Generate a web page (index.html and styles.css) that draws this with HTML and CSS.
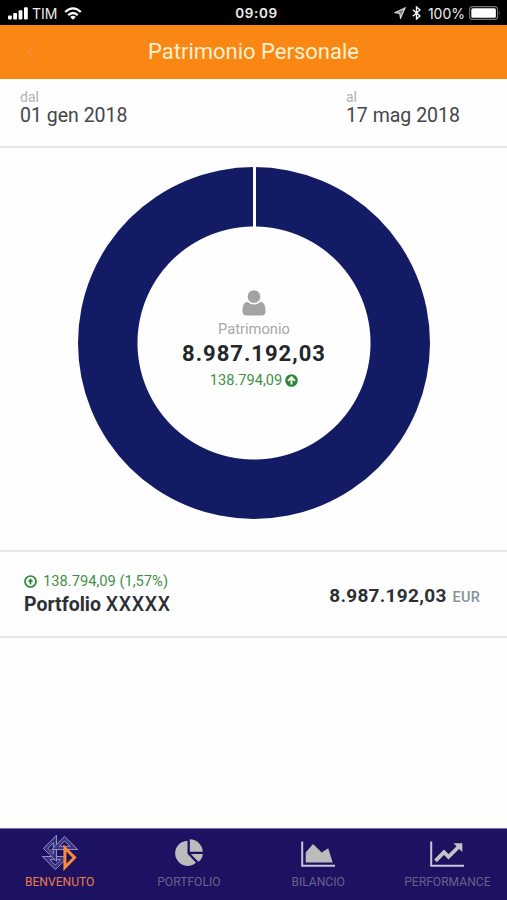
FILE: index.html
```html
<!DOCTYPE html>
<html lang="it">
<head>
  <meta charset="UTF-8">
  <title>Patrimonio Personale</title>
  <link rel="stylesheet" href="styles.css">
</head>
<body>
  <div class="status">
    <div class="status-left">
      <svg width="20" height="13" viewBox="0 0 20 13" fill="#fff">
        <rect x="0" y="8.5" width="3.8" height="4" rx="1"/>
        <rect x="5.2" y="6" width="3.8" height="6.5" rx="1"/>
        <rect x="10.6" y="3.2" width="3.8" height="9.3" rx="1"/>
        <rect x="16" y="0.3" width="3.8" height="12.2" rx="1"/>
      </svg>
      <span class="carrier">TIM</span>
      <svg width="18" height="13" viewBox="0 0 18 13" fill="none" stroke="#fff" stroke-width="2.3">
        <path d="M1.2 5 Q9 -2.2 16.8 5"/>
        <path d="M4.2 8.2 Q9 3.8 13.8 8.2"/>
        <path d="M6.2 9.9 Q9 7.6 11.8 9.9 L9 12.8 Z" fill="#fff" stroke="none"/>
      </svg>
    </div>
    <div class="clock">09:09</div>
    <div class="status-right">
      <svg width="12" height="12" viewBox="0 0 12 12">
        <path d="M11 1 L6.5 11 L5.8 6.3 L1 5.6 Z" fill="#777" stroke="#ddd" stroke-width="1.2"/>
      </svg>
      <svg class="bt" width="9" height="14" viewBox="0 0 9 14" fill="none" stroke="#fff" stroke-width="1.4">
        <path d="M0.8 3.8 L8 10 L4.5 13 V1 L8 4 L0.8 10.2"/>
      </svg>
      <span class="percent">100%</span>
      <svg width="32" height="14" viewBox="0 0 32 14">
        <rect x="0.6" y="0.6" width="28" height="12.8" rx="3" fill="none" stroke="#777" stroke-width="1.1"/>
        <rect x="2.3" y="2.2" width="24.6" height="9.6" rx="1.5" fill="#fff"/>
        <path d="M30 4.7 Q31.5 7 30 9.3 Z" fill="#777"/>
      </svg>
    </div>
  </div>

  <div class="header">
    <svg class="back" width="12" height="20" viewBox="0 0 12 20" fill="none" stroke="#f98a31" stroke-width="2">
      <path d="M10.5 1 L2 10 L10.5 19"/>
    </svg>
    <h1 class="title">Patrimonio Personale</h1>
  </div>

  <div class="dates">
    <div class="date from">
      <div class="date-label">dal</div>
      <div class="date-value">01 gen 2018</div>
    </div>
    <div class="date to">
      <div class="date-label">al</div>
      <div class="date-value">17 mag 2018</div>
    </div>
  </div>

  <div class="chart">
    <div class="donut">
      <svg class="user" width="24" height="26" viewBox="0 0 24 26" fill="#a3a3a3">
        <path d="M5 11.8 Q12 17.4 19 11.8 Q23.6 13 23.6 21 Q23.6 25.5 19.5 25.5 H4.5 Q0.4 25.5 0.4 21 Q0.4 13 5 11.8 Z"/>
        <circle cx="12" cy="6.6" r="6.8" stroke="#fefefe" stroke-width="1"/>
      </svg>
      <div class="donut-label">Patrimonio</div>
      <div class="donut-value">8.987.192,03</div>
      <div class="donut-gain">
        <span class="gain-text">138.794,09</span>
        <svg width="13" height="13" viewBox="0 0 13 13">
          <circle cx="6.5" cy="6.5" r="6.3" fill="#2c8735"/>
          <path d="M6.5 10.6 V3.5 M3 6.8 L6.5 3.2 L10 6.8" fill="none" stroke="#fff" stroke-width="1.9"/>
        </svg>
      </div>
    </div>
  </div>

  <div class="row">
    <div class="row-info">
      <div class="row-gain">
        <svg width="13" height="13" viewBox="0 0 13 13" fill="none" stroke="#2c8735">
          <circle cx="6.5" cy="6.5" r="5.5" stroke-width="1.7"/>
          <path d="M6.5 9.5 V5" stroke-width="1.8"/>
          <path d="M3.7 6.8 L6.5 3.3 L9.3 6.8 Z" fill="#2c8735" stroke="none"/>
        </svg>
        <span class="row-gain-text">138.794,09 (1,57%)</span>
      </div>
      <div class="row-name"><b>Portfolio</b> <span class="code">XXXXX</span></div>
    </div>
    <div class="row-amount">
      <span class="amount">8.987.192,03</span>
      <span class="currency">EUR</span>
    </div>
  </div>

  <div class="tabs">
    <div class="tab active">
      <svg class="tab-icon" width="38" height="38" viewBox="-19 -19 38 38">
        <defs>
          <path id="blade" d="M3.5 -8.3 L16.6 4.6 L3.5 17.7 Z M6.7 -.7 V10.1 L12.1 4.6 Z"/>
        </defs>
        <g fill="#3a3480" fill-rule="evenodd" stroke="#958fc6" stroke-width="1">
          <use href="#blade" transform="rotate(90)"/>
          <use href="#blade" transform="rotate(180)"/>
          <use href="#blade" transform="rotate(270)"/>
        </g>
        <path d="M4.9 -5 L14.6 4.6 L4.9 14.4 Z" fill="#1d1262" stroke="#f98a38" stroke-width="3"/>
      </svg>
      <div class="tab-label">BENVENUTO</div>
    </div>
    <div class="tab">
      <svg class="tab-icon" width="30" height="38" viewBox="0 0 30 38" fill="#bcbcbc">
        <path d="M13.5 6.7 A12.6 12.6 0 1 0 22 28.8 L13.5 19.8 Z"/>
        <path d="M15.8 5.3 A13 13 0 0 1 28.8 17.7 H15.8 Z"/>
        <path d="M16.8 19.9 H28.8 Q28.5 24.9 24.4 27.8 Z"/>
      </svg>
      <div class="tab-label">PORTFOLIO</div>
    </div>
    <div class="tab">
      <svg class="tab-icon" width="34" height="38" viewBox="0 0 34 38">
        <path d="M1.2 7.5 V31.8 H34" fill="none" stroke="#c9c6dc" stroke-width="2"/>
        <path d="M4.7 28.5 V18.5 L12 10 L20.7 18.5 L27.2 14.3 L31.7 28.5 Z" fill="#bcbcbc"/>
      </svg>
      <div class="tab-label">BILANCIO</div>
    </div>
    <div class="tab">
      <svg class="tab-icon" width="34" height="38" viewBox="0 0 34 38">
        <path d="M1.2 7.5 V31.8 H34" fill="none" stroke="#c9c6dc" stroke-width="2"/>
        <path d="M5.5 26.8 L14 18.2 L18.5 22.8 L29.5 12" fill="none" stroke="#c4c4c4" stroke-width="3.8"/>
        <path d="M23.5 9.3 H32.3 V18 Z" fill="#c4c4c4"/>
      </svg>
      <div class="tab-label">PERFORMANCE</div>
    </div>
  </div>
</body>
</html>
```

FILE: styles.css
```css
html, body {
  margin: 0;
  padding: 0;
  height: 100%;
}
body {
  display: flex;
  flex-direction: column;
  background: #fefefe;
  font-family: Roboto, "Liberation Sans", sans-serif;
  color: #2c3034;
  overflow: hidden;
}
svg {
  display: block;
  flex: none;
}
span, .title, .date-value, .tab-label {
  white-space: nowrap;
}

/* status bar */
.status {
  display: grid;
  grid-template-columns: 1fr auto 1fr;
  align-items: center;
  height: 25px;
  padding: 1px 6px 0 8px;
  box-sizing: border-box;
  background: #000;
  color: #eee;
  font-family: Inter, sans-serif;
  font-size: 14px;
}
.status-left, .status-right {
  display: flex;
  align-items: center;
}
.status-right {
  justify-content: flex-end;
}
.carrier {
  margin: 0 7px 0 4px;
  font-size: 14px;
}
.clock {
  padding-left: 4px;
  font-size: 13.5px;
  font-weight: 600;
  letter-spacing: 0.6px;
}
.bt {
  margin: 0 7px 0 6px;
}
.percent {
  margin-right: 4px;
  font-size: 14px;
}

/* orange header */
.header {
  display: grid;
  grid-template-columns: 1fr auto 1fr;
  align-items: center;
  height: 54px;
  background: #fa8714;
}
.back {
  margin-left: 26px;
}
.title {
  margin: 0;
  font-size: 22px;
  font-weight: 400;
  line-height: 54px;
  color: #fff0cf;
}

/* date range */
.dates {
  display: flex;
  justify-content: space-between;
  height: 69px;
  padding: 11px 47px 0 20px;
  box-sizing: border-box;
}
.dates, .row {
  border-bottom: 2px solid #e6e6e6;
}
.date-label {
  font-size: 14px;
  line-height: 15px;
  color: #b2b2b2;
}
.date-value {
  font-size: 19.5px;
  line-height: 21px;
  color: #444649;
}

/* donut */
.chart {
  display: flex;
  justify-content: center;
  height: 402px;
  padding: 19px 0 0 1px;
  box-sizing: border-box;
}
.donut {
  display: flex;
  flex-direction: column;
  align-items: center;
  width: 352px;
  height: 352px;
  padding-top: 123px;
  box-sizing: border-box;
  border-radius: 50%;
  background:
    linear-gradient(#fefefe, #fefefe) center top / 3px 62px no-repeat,
    radial-gradient(circle, #fefefe 116px, #131b65 117px);
}
.donut-label {
  margin-top: 4px;
  font-size: 14.7px;
  line-height: 18px;
  color: #a7a7a7;
}
.donut-value {
  margin-top: 3px;
  font-size: 22px;
  font-weight: 700;
  line-height: 26px;
  letter-spacing: 1px;
  color: #23272a;
}
.donut-gain {
  display: flex;
  align-items: center;
  gap: 3px;
  margin-top: 4px;
  line-height: 18px;
  font-size: 14.6px;
  color: #3f9147;
}

/* portfolio row */
.row {
  display: flex;
  justify-content: space-between;
  height: 88px;
  padding: 20px 27px 0 24px;
  box-sizing: border-box;
  border-top: 2px solid #e6e6e6;
}
.row-gain {
  display: flex;
  align-items: center;
  gap: 6px;
  font-size: 14.7px;
  line-height: 18px;
  color: #3f9147;
}
.row-name {
  margin-top: 3px;
  font-size: 19.5px;
  line-height: 24px;
}
.code {
  font-weight: 500;
  letter-spacing: 0.7px;
}
.row-amount {
  display: flex;
  align-items: baseline;
  gap: 6px;
  padding-top: 12px;
  line-height: 24px;
}
.amount {
  font-size: 19px;
  font-weight: 700;
  letter-spacing: 0.3px;
}
.currency {
  font-size: 14.5px;
  font-weight: 500;
  letter-spacing: 0.2px;
  color: #85929a;
}

/* bottom tabs */
.tabs {
  display: flex;
  margin-top: auto;
  margin-left: -5px;
  margin-right: -5px;
  height: 72px;
  border-top: 1px solid #77739f;
  box-sizing: border-box;
  background: #1d1262;
}
.tab {
  display: flex;
  flex: 1;
  flex-direction: column;
  align-items: center;
  padding-top: 5px;
  color: #66618b;
}
.tab-label {
  margin-top: 2px;
  font-size: 12.1px;
  line-height: 16px;
}
.active {
  color: #ec7a48;
}
```
